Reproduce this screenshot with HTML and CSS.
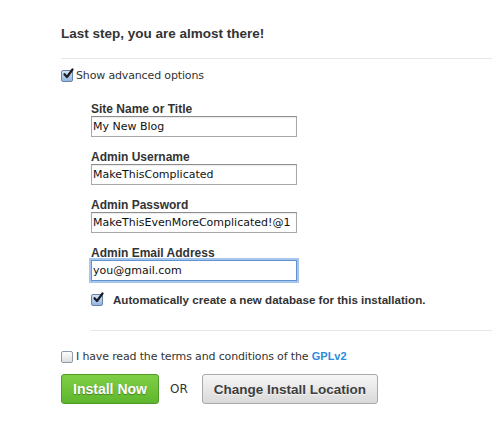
FILE: index.html
```html
<!DOCTYPE html>
<html lang="en">
  <head>
    <meta charset="UTF-8" />
    <meta name="viewport" content="width=device-width, initial-scale=1.0" />
    <title>install</title>
    <link rel="stylesheet" href="styles.css">
  </head>
  <body>
    <main class="install">
      <h2 class="install_title">Last step, you are almost there!</h2>
      <div class="rule"></div>
      <label class="check_row">
        <span class="box on"><svg viewBox="0 0 12 12"><path d="M2.5 6.2 L5 9 L10.5 1.5" /></svg></span>
        Show advanced options
      </label>
      <section class="advanced">
        <div class="field">
          <label class="field_label">Site Name or Title</label>
          <input class="field_input" type="text" value="My New Blog">
        </div>
        <div class="field">
          <label class="field_label">Admin Username</label>
          <input class="field_input" type="text" value="MakeThisComplicated">
        </div>
        <div class="field">
          <label class="field_label">Admin Password</label>
          <input class="field_input" type="text" value="MakeThisEvenMoreComplicated!@1">
        </div>
        <div class="field">
          <label class="field_label">Admin Email Address</label>
          <input class="field_input focus" type="text" value="you@gmail.com">
        </div>
        <label class="check_row db">
          <span class="box on"><svg viewBox="0 0 12 12"><path d="M2.5 6.2 L5 9 L10.5 1.5" /></svg></span>
          Automatically create a new database for this installation.
        </label>
        <div class="rule"></div>
      </section>
      <label class="check_row terms">
        <span class="box"></span>
        <span>I have read the terms and conditions of the <a href="#">GPLv2</a></span>
      </label>
      <div class="actions">
        <button class="btn btn_green">Install Now</button>
        <span class="or">OR</span>
        <button class="btn btn_gray">Change Install Location</button>
      </div>
    </main>
  </body>
</html>
```
FILE: styles.css
```css
* {
  margin: 0;
  padding: 0;
  box-sizing: border-box;
}
body {
  background-color: #fff;
  color: #333;
  font-family: "Liberation Sans", Arial, sans-serif;
}
.install {
  padding: 25px 0 0 61px;
}
.install_title {
  font-size: 13.5px;
  line-height: 17px;
  font-weight: bold;
  color: #333;
}
.rule {
  height: 1px;
  background-color: #e6e6e6;
  margin-top: 16px;
}
.check_row {
  display: flex;
  align-items: center;
  gap: 3px;
  margin-top: 10px;
  font-family: "DejaVu Sans", sans-serif;
  font-size: 11px;
  line-height: 14px;
  letter-spacing: -0.15px;
  color: #333;
}
.box {
  width: 12px;
  height: 12px;
  border: 1px solid #8d9aae;
  border-radius: 2px;
  background: linear-gradient(#fdfdfd, #dedede);
  display: flex;
  flex: none;
}
.box.on {
  background: linear-gradient(#d3e3f5, #93b5e0);
  border-color: #6a82a8;
}
.box svg {
  width: 12px;
  height: 12px;
  margin: -3px 0 0 0;
  overflow: visible;
}
.box path {
  fill: none;
  stroke: #1c1c24;
  stroke-width: 2.2;
  stroke-linecap: round;
  stroke-linejoin: round;
}
.advanced {
  padding: 19px 0 0 30px;
}
.field {
  display: flex;
  flex-direction: column;
  align-items: flex-start;
  margin-bottom: 13px;
}
.field_label {
  font-size: 12px;
  line-height: 14px;
  font-weight: bold;
  color: #333;
}
.field_input {
  width: 206px;
  height: 21px;
  border: 1px solid #a8a8a8;
  border-top-color: #8e8e8e;
  padding: 0 1px;
  font-family: "DejaVu Sans", sans-serif;
  font-size: 11px;
  color: #111;
  outline: none;
  box-shadow: inset 0 1px 1px rgba(0, 0, 0, 0.08);
}
.field_input.focus {
  border: 1px solid #5f93d2;
  box-shadow: 0 0 0 2px #a8c6eb;
}
.check_row.db {
  gap: 10px;
  margin-top: -1px;
  font-family: "Liberation Sans", Arial, sans-serif;
  font-size: 11.6px;
  font-weight: bold;
  letter-spacing: 0;
}
.advanced .rule {
  margin-top: 23px;
}
.check_row.terms {
  margin-top: 18px;
}
.terms a {
  color: #2a8be0;
  font-weight: bold;
  text-decoration: none;
  font-family: "Liberation Sans", Arial, sans-serif;
  font-size: 11px;
  letter-spacing: 0;
}
.actions {
  display: flex;
  align-items: center;
  margin-top: 10px;
}
.btn {
  height: 30px;
  border-radius: 3px;
  font-family: "Liberation Sans", Arial, sans-serif;
  font-weight: bold;
  cursor: pointer;
}
.btn_green {
  width: 98px;
  font-size: 14px;
  color: #fff;
  border: 1px solid #4e9a26;
  background: linear-gradient(#7fcf45, #5fb62c);
  text-shadow: 0 1px 1px rgba(0, 0, 0, 0.35);
}
.btn_gray {
  width: 176px;
  font-size: 13.5px;
  color: #3e3e3e;
  border: 1px solid #a9a9a9;
  background: linear-gradient(#f6f6f6, #d9d9d9);
  text-shadow: 0 1px 0 rgba(255, 255, 255, 0.7);
}
.or {
  font-family: "DejaVu Sans", sans-serif;
  font-size: 12px;
  color: #333;
  margin: 0 14px 0 11px;
}
```
